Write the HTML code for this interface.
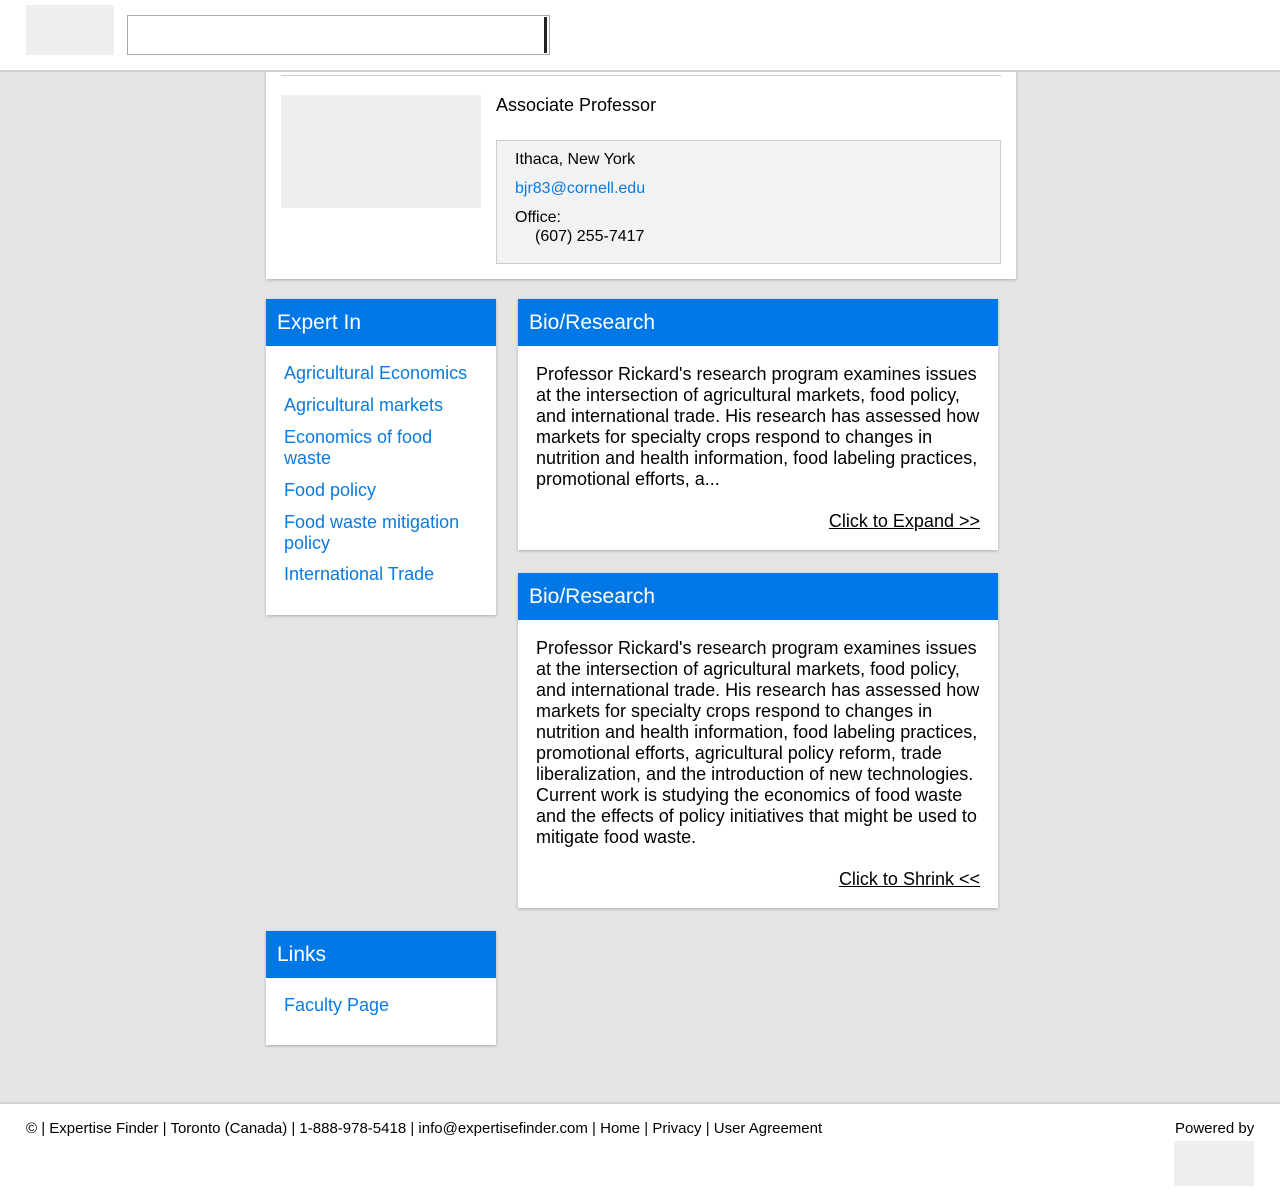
<!DOCTYPE html>
<html><head><meta charset="utf-8"><style>
*{box-sizing:border-box;margin:0;padding:0}
body{width:1280px;height:1202px;background:#e5e5e5;font-family:"Liberation Sans",sans-serif;position:relative;overflow:hidden;color:#000}
.abs{position:absolute}
.hdr{left:0;top:0;width:1280px;height:72px;background:#fff;border-bottom:2px solid #d0d0d0}
.card{background:#fff;box-shadow:0 1px 3px rgba(0,0,0,.25)}
.bar{background:#0077e6;color:#fff;font-size:21px;height:47px;line-height:47px;padding-left:11px}
a{color:#0a7be0;text-decoration:none}
.list div{font-size:18px;color:#0a7be0;line-height:21px;margin-bottom:11px}
.txt{font-size:18px;line-height:21px;padding:18px 18px 0 18px}
.exp{font-size:18px;text-align:right;text-decoration:underline;padding-right:18px}
</style></head><body>
<div class="abs card" style="left:266px;top:40px;width:750px;height:239px"></div>
<div class="abs" style="left:281px;top:75px;width:720px;height:1px;background:#ccc"></div>
<div class="abs" style="left:281px;top:95px;width:200px;height:113px;background:#eee"></div>
<div class="abs" style="left:496px;top:95px;font-size:18px">Associate Professor</div>
<div class="abs" style="left:496px;top:140px;width:505px;height:124px;background:#f2f2f2;border:1px solid #ccc"></div>
<div class="abs" style="left:515px;top:151px;font-size:16px">Ithaca, New York</div>
<div class="abs" style="left:515px;top:180px;font-size:16px;color:#0a7be0">bjr83@cornell.edu</div>
<div class="abs" style="left:515px;top:209px;font-size:16px">Office:</div>
<div class="abs" style="left:535px;top:228px;font-size:16px">(607) 255-7417</div>
<div class="abs hdr"></div>
<div class="abs" style="left:26px;top:5px;width:88px;height:50px;background:#eee"></div>
<div class="abs" style="left:127px;top:15px;width:423px;height:40px;border:1px solid #aaa;background:#fff"></div>
<div class="abs" style="left:544px;top:17px;width:3px;height:36px;background:#222"></div>

<div class="abs card" style="left:266px;top:299px;width:230px;height:316px">
<div class="bar">Expert In</div>
<div class="list" style="padding:17px 25px 0 18px">
<div>Agricultural Economics</div><div>Agricultural markets</div><div>Economics of food waste</div><div>Food policy</div><div style="margin-bottom:10px">Food waste mitigation policy</div><div>International Trade</div></div></div>

<div class="abs card" style="left:518px;top:299px;width:480px;height:251px">
<div class="bar">Bio/Research</div>
<div class="txt">Professor Rickard's research program examines issues at the intersection of agricultural markets, food policy, and international trade. His research has assessed how markets for specialty crops respond to changes in nutrition and health information, food labeling practices, promotional efforts, a...</div>
<div class="exp" style="margin-top:21px">Click to Expand &gt;&gt;</div></div>

<div class="abs card" style="left:518px;top:573px;width:480px;height:335px">
<div class="bar">Bio/Research</div>
<div class="txt">Professor Rickard's research program examines issues at the intersection of agricultural markets, food policy, and international trade. His research has assessed how markets for specialty crops respond to changes in nutrition and health information, food labeling practices, promotional efforts, agricultural policy reform, trade liberalization, and the introduction of new technologies. Current work is studying the economics of food waste and the effects of policy initiatives that might be used to mitigate food waste.</div>
<div class="exp" style="margin-top:21px">Click to Shrink &lt;&lt;</div></div>

<div class="abs card" style="left:266px;top:931px;width:230px;height:114px">
<div class="bar">Links</div>
<div class="list" style="padding:17px 0 0 18px"><div>Faculty Page</div></div></div>

<div class="abs" style="left:0;top:1102px;width:1280px;height:100px;background:#fff;border-top:2px solid #d0d0d0"></div>
<div class="abs" style="left:26px;top:1120px;font-size:15px">© | Expertise Finder | Toronto (Canada) | 1-888-978-5418 | info@expertisefinder.com | Home | Privacy | User Agreement</div>
<div class="abs" style="left:1175px;top:1120px;font-size:15px">Powered by</div>
<div class="abs" style="left:1174px;top:1141px;width:80px;height:45px;background:#eee"></div>
</body></html>
